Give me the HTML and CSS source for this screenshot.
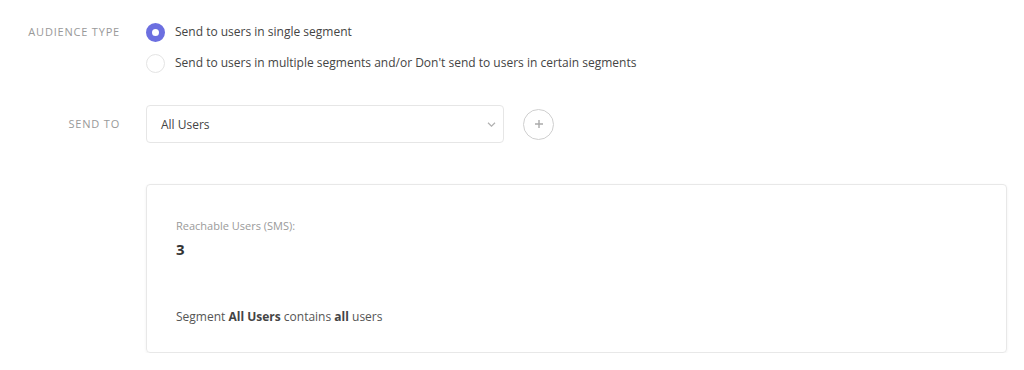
FILE: index.html
```html
<!DOCTYPE html>
<html>
  <head>
    <meta charset="UTF-8" />
    <meta name="viewport" content="width=device-width, initial-scale=1.0" />
    <title>Audience</title>
    <link rel="stylesheet" href="styles.css">
  </head>
  <body>
    <div class="form">
      <div class="field audience">
        <div class="label">Audience Type</div>
        <div class="options">
          <label class="radio checked">
            <span class="dot"></span>
            <span>Send to users in single segment</span>
          </label>
          <label class="radio">
            <span class="dot"></span>
            <span>Send to users in multiple segments and/or Don't send to users in certain segments</span>
          </label>
        </div>
      </div>
      <div class="field send-to">
        <div class="label">Send To</div>
        <div class="controls">
          <div class="select">
            <span>All Users</span>
            <svg class="chevron" width="9" height="5" viewBox="0 0 9 5">
              <path d="M1 0.8l3.5 3.4 3.5-3.4" fill="none" stroke="#b0b0b0" stroke-width="1.2" />
            </svg>
          </div>
          <button class="add">
            <svg width="10" height="10" viewBox="0 0 10 10">
              <path d="M5 1v8M1 5h8" stroke="#aaa" stroke-width="1.4" />
            </svg>
          </button>
        </div>
      </div>
      <div class="field summary">
        <div class="label"></div>
        <div class="card">
          <div class="card-title">Reachable Users (SMS):</div>
          <div class="count">3</div>
          <div class="note">Segment <b>All Users</b> contains <b>all</b> users</div>
        </div>
      </div>
    </div>
  </body>
</html>
```

FILE: styles.css
```css
body {
  margin: 0;
  font-family: 'Open Sans', 'Noto Sans', sans-serif;
  font-size: 12px;
  color: #444;
  background: #fff;
}
.form {
  padding-top: 22px;
  padding-right: 17px;
}
.field {
  display: grid;
  grid-template-columns: 120px 1fr;
  column-gap: 26px;
}
.label {
  text-align: right;
  text-transform: uppercase;
  font-size: 11px;
  letter-spacing: 0.8px;
  color: #999;
  line-height: 20px;
}
.options {
  display: flex;
  flex-direction: column;
  row-gap: 11px;
}
.radio {
  display: flex;
  align-items: center;
  column-gap: 10px;
  line-height: 20px;
}
.dot {
  width: 19px;
  height: 19px;
  box-sizing: border-box;
  border: 1px solid #e4e4e4;
  border-radius: 50%;
  background: #fff;
}
.radio.checked .dot {
  border: 6px solid #6c6fe0;
}
.send-to {
  margin-top: 32px;
}
.send-to .label {
  line-height: 38px;
}
.controls {
  display: flex;
  align-items: center;
  column-gap: 19px;
}
.select {
  width: 358px;
  height: 38px;
  box-sizing: border-box;
  border: 1px solid #e6e6e6;
  border-radius: 4px;
  padding: 0 7px 0 14px;
  display: flex;
  align-items: center;
  justify-content: space-between;
  color: #444;
}
.add {
  width: 31px;
  height: 31px;
  border: 1px solid #cfcfcf;
  border-radius: 50%;
  background: #fff;
  display: flex;
  align-items: center;
  justify-content: center;
  padding: 0;
}
.summary {
  margin-top: 41px;
}
.card {
  height: 169px;
  box-sizing: border-box;
  border: 1px solid #e8e8e8;
  border-radius: 4px;
  box-shadow: 0 1px 3px rgba(0, 0, 0, 0.06);
  padding: 33px 29px;
}
.card-title {
  font-size: 11px;
  color: #9a9a9a;
}
.count {
  margin-top: 6px;
  font-size: 15px;
  font-weight: bold;
  color: #333;
}
.note {
  margin-top: 49px;
  color: #555;
}
.note b {
  color: #444;
}
```
